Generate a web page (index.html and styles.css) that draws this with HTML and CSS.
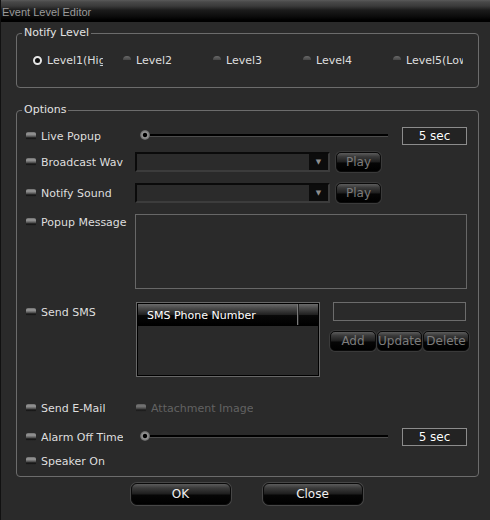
FILE: index.html
```html
<!DOCTYPE html>
<html>
<head>
<meta charset="utf-8">
<link rel="stylesheet" href="styles.css">
</head>
<body>
<div class="window">
  <div class="titlebar">Event Level Editor</div>

  <fieldset class="group notify">
    <legend>Notify Level</legend>
    <div class="radios">
      <label class="radio on"><span class="dot"></span><span class="rtxt">Level1(High)</span></label>
      <label class="radio"><span class="dot"></span><span class="rtxt">Level2</span></label>
      <label class="radio"><span class="dot"></span><span class="rtxt">Level3</span></label>
      <label class="radio"><span class="dot"></span><span class="rtxt">Level4</span></label>
      <label class="radio"><span class="dot"></span><span class="rtxt">Level5(Low)</span></label>
    </div>
  </fieldset>

  <fieldset class="group options">
    <legend>Options</legend>
    <div class="rows">
      <div class="row r-live">
        <div class="check"><span class="box"></span><span class="txt">Live Popup</span></div>
        <div class="slider"><span class="track"></span><span class="thumb"></span></div>
        <div class="value">5 sec</div>
      </div>
      <div class="row r-bcast">
        <div class="check clip"><span class="box"></span><span class="txt">Broadcast Wave</span></div>
        <div class="combo"><span class="field"></span><span class="arrow">&#9660;</span></div>
        <button class="btn small play">Play</button>
      </div>
      <div class="row r-sound">
        <div class="check"><span class="box"></span><span class="txt">Notify Sound</span></div>
        <div class="combo"><span class="field"></span><span class="arrow">&#9660;</span></div>
        <button class="btn small play">Play</button>
      </div>
      <div class="row r-popup top">
        <div class="check"><span class="box"></span><span class="txt">Popup Message</span></div>
        <div class="msg"></div>
      </div>
      <div class="row r-sms top">
        <div class="check"><span class="box"></span><span class="txt">Send SMS</span></div>
        <div class="list">
          <div class="lhead"><span class="col1">SMS Phone Number</span><span class="col2"></span></div>
        </div>
        <div class="smsside">
          <div class="input"></div>
          <div class="smsbtns">
            <button class="btn small b-add">Add</button>
            <button class="btn small b-upd">Update</button>
            <button class="btn small b-del">Delete</button>
          </div>
        </div>
      </div>
      <div class="row r-mail">
        <div class="check"><span class="box"></span><span class="txt">Send E-Mail</span></div>
        <div class="check disabled attach"><span class="box"></span><span class="txt">Attachment Image</span></div>
      </div>
      <div class="row r-alarm">
        <div class="check clip"><span class="box"></span><span class="txt">Alarm Off Time</span></div>
        <div class="slider"><span class="track"></span><span class="thumb"></span></div>
        <div class="value">5 sec</div>
      </div>
      <div class="row r-speak">
        <div class="check"><span class="box"></span><span class="txt">Speaker On</span></div>
      </div>
    </div>
  </fieldset>

  <div class="actions">
    <button class="btn big">OK</button>
    <button class="btn big">Close</button>
  </div>
</div>
</body>
</html>
```

FILE: styles.css
```css
* { box-sizing: border-box; }
html, body { margin: 0; padding: 0; background: #2a2a2a; }
body { font-family: "DejaVu Sans", sans-serif; font-size: 11px; color: #dedede; }

.window {
  width: 490px;
  height: 520px;
  background: #2a2a2a;
  overflow: hidden;
  border-left: 1px solid #111;
}

.titlebar {
  height: 22px;
  line-height: 24px;
  padding-left: 1px;
  font-family: "Liberation Sans", sans-serif;
  font-size: 11px;
  color: #9a9a9a;
  background: linear-gradient(to bottom, #5a5a5a 0, #484848 10%, #3a3a3a 30%, #1c1c1c 50%, #0a0a0a 85%, #000 100%);
  border-bottom: 2px solid #000;
}

.group {
  margin: 0 11px 0 15px;
  padding: 0;
  min-width: 0;
  border: 1px solid #6c6c6c;
  border-radius: 4px;
}
.group legend {
  margin-left: 5px;
  padding: 0 2px;
  line-height: 14px;
  font-size: 11px;
  color: #e2e2e2;
}
.notify { margin-top: 4px; }
.options { margin-top: 15px; }

/* radios */
.radios {
  display: flex;
  padding: 10px 0 17px 16px;
}
.radio {
  display: flex;
  align-items: center;
  gap: 5px;
  width: 70px;
  margin-right: 20px;
  height: 20px;
  overflow: hidden;
  white-space: nowrap;
  flex: none;
}
.radio .dot {
  width: 8px;
  height: 8px;
  flex: none;
  border-radius: 50%;
  background: linear-gradient(to bottom, #6a6a6a 0, #4a4a4a 45%, #2a2a2a 55%, #2a2a2a 100%);
}
.radio.on .dot {
  width: 9px;
  height: 9px;
  background: #111;
  border: 2px solid #e6e6e6;
}
.rtxt { overflow: hidden; }

/* options rows */
.rows { padding: 10px 10px 6px 9px; }
.row {
  display: flex;
  align-items: center;
  height: 18px;
}
.row.top { align-items: flex-start; }
.r-bcast { margin-top: 7px; height: 20px; }
.r-sound { margin-top: 11px; height: 20px; }
.r-popup { margin-top: 11px; height: 75px; }
.r-sms { margin-top: 13px; height: 75px; }
.r-mail { margin-top: 22px; }
.r-alarm { margin-top: 11px; }
.r-speak { margin-top: 6px; }

.check {
  display: flex;
  align-items: center;
  gap: 5px;
  width: 109px;
  flex: none;
  white-space: nowrap;
  height: 16px;
}
.check .txt { overflow: hidden; }
.check.clip .txt { width: 82px; }
.r-sms .check { margin-top: 2px; }
.check .box {
  width: 10px;
  height: 8px;
  flex: none;
  border-radius: 2px 2px 1px 1px;
  background: linear-gradient(to bottom, #6e6e6e 0, #9a9a9a 25%, #707070 45%, #4a4a4a 60%, #111 75%, #2e2e2e 100%);
}
.check.disabled .txt { color: #626262; }
.check.disabled .box { opacity: 0.7; }
.check.attach { width: auto; margin-left: 1px; }

/* slider */
.slider {
  position: relative;
  width: 248px;
  height: 18px;
  margin-left: 5px;
  flex: none;
}
.slider .track {
  position: absolute;
  left: 2px;
  right: 0;
  top: 7px;
  height: 3px;
  border-top: 2px solid #000;
  border-bottom: 1px solid #4c4c4c;
}
.slider .thumb {
  position: absolute;
  left: 0;
  top: 3px;
  width: 10px;
  height: 10px;
  border-radius: 50%;
  background: radial-gradient(circle, #000 0, #000 25%, #9a9a9a 38%, #6c6c6c 62%, #3a3a3a 80%, #1a1a1a 100%);
}

.value {
  width: 65px;
  height: 18px;
  margin-left: 14px;
  flex: none;
  border: 1px solid #8c8c8c;
  background: #232323;
  color: #fff;
  font-size: 12px;
  line-height: 16px;
  text-align: center;
  text-shadow: 0 0 1px #000;
}

/* combo */
.combo {
  display: flex;
  width: 195px;
  height: 20px;
  flex: none;
  border: 2px solid #0a0a0a;
  border-right-color: #3c3c3c;
  border-bottom-color: #3c3c3c;
  background: #2b2b2b;
}
.combo .field { flex: 1; }
.combo .arrow {
  width: 19px;
  background: #0c0c0c;
  color: #8e8e8e;
  font-size: 7px;
  line-height: 16px;
  text-align: center;
}

/* buttons */
.btn {
  font-family: "DejaVu Sans", sans-serif;
  padding: 0;
  margin: 0;
  cursor: default;
  border: 1px solid #0a0a0a;
  background: linear-gradient(to bottom, #5c5c5c 0, #3a3a3a 20%, #1e1e1e 50%, #060606 55%, #000 100%);
  box-shadow: 0 0 0 1px #3a3a3a;
}
.btn.small {
  height: 20px;
  border-radius: 5px;
  font-size: 12px;
  color: #7c7c7c;
}
.play { width: 45px; margin-left: 6px; }

/* popup message */
.msg {
  width: 332px;
  height: 75px;
  flex: none;
  border: 1px solid #676767;
  background: #2a2a2a;
}

/* sms */
.list {
  width: 184px;
  height: 75px;
  margin-left: 1px;
  flex: none;
  border: 1px solid #686868;
  box-shadow: inset 0 0 0 1px #000;
  padding: 1px;
  background: #2a2a2a;
}
.lhead {
  display: flex;
  height: 22px;
  background: linear-gradient(to bottom, #6a6a6a 0, #4a4a4a 20%, #222 50%, #080808 55%, #000 100%);
  border-bottom: 1px solid #000;
}
.lhead .col1 {
  flex: 1;
  padding-left: 9px;
  line-height: 24px;
  font-size: 11px;
  color: #fff;
  white-space: nowrap;
}
.lhead .col2 {
  width: 21px;
  border-left: 1px solid #7a7a7a;
  box-shadow: inset 1px 0 0 #222;
}
.smsside {
  margin-left: 10px;
  flex: none;
}
.input {
  width: 133px;
  height: 19px;
  margin-left: 3px;
  border: 1px solid #6c6c6c;
  background: #2a2a2a;
}
.smsbtns {
  display: flex;
  gap: 1px;
  margin-top: 10px;
}
.b-add { width: 46px; }
.b-upd { width: 45px; }
.b-del { width: 46px; }

/* bottom actions */
.actions {
  display: flex;
  justify-content: center;
  gap: 32px;
  margin-top: 6px;
  padding-left: 2px;
}
.btn.big {
  width: 100px;
  height: 22px;
  border-radius: 6px;
  font-size: 12px;
  color: #f0f0f0;
  box-shadow: 0 0 0 1px #474747;
}
```
